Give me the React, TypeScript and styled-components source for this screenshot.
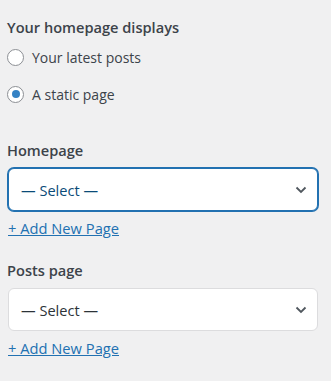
import * as React from 'react';
import styled, { createGlobalStyle } from 'styled-components';

const GlobalStyle = createGlobalStyle`
  html, body {
    margin: 0;
    padding: 0;
    background: #f0f0f1;
  }
  body {
    font-family: "Open Sans", "Noto Sans", sans-serif;
    font-size: 14px;
    color: #3c434a;
  }
`;

const Panel = styled.div`
  width: 331px;
  height: 381px;
  box-sizing: border-box;
  padding: 17px 13px 0 8px;
  display: flex;
  flex-direction: column;
`;

const Legend = styled.div`
  font-weight: 600;
  font-size: 14.6px;
  line-height: 20px;
  color: #3c434a;
  margin-left: -1px;
`;

const RadioList = styled.div`
  display: flex;
  flex-direction: column;
  gap: 17px;
  margin-top: 10px;
`;

const RadioRow = styled.label`
  display: flex;
  align-items: center;
  gap: 8px;
  height: 20px;
  font-size: 14px;
  color: #3c434a;
`;

const RadioCircle = styled.span<{ $checked?: boolean }>`
  width: 17px;
  height: 17px;
  box-sizing: border-box;
  border-radius: 50%;
  border: 1px solid #8c8f94;
  background: #fff;
  margin-left: -1px;
  display: flex;
  align-items: center;
  justify-content: center;

  &::after {
    content: '';
    width: 8px;
    height: 8px;
    border-radius: 50%;
    background: ${(p) => (p.$checked ? '#3582c4' : 'transparent')};
  }
`;

const Field = styled.div<{ $top: number }>`
  display: flex;
  flex-direction: column;
  margin-top: ${(p) => p.$top}px;
`;

const FieldLabel = styled.div`
  font-weight: 600;
  font-size: 14.6px;
  line-height: 20px;
  color: #3c434a;
  margin-left: -1px;
`;

const SelectBox = styled.div<{ $focused?: boolean }>`
  margin-top: 8px;
  width: 310px;
  height: 43px;
  box-sizing: border-box;
  background: #fff;
  border-radius: 6px;
  border: 1px solid ${(p) => (p.$focused ? '#2271b1' : '#dcdcde')};
  box-shadow: ${(p) => (p.$focused ? '0 0 0 1px #2271b1' : 'none')};
  display: flex;
  align-items: center;
  justify-content: space-between;
  padding: 0 10px 0 12px;
  color: ${(p) => (p.$focused ? '#0a4b78' : '#2c3338')};
  font-size: 14.6px;
`;

const Chevron = styled.svg`
  width: 12px;
  height: 8px;
  color: #50575e;
`;

const AddLink = styled.a`
  margin-top: 7px;
  font-size: 14.7px;
  line-height: 20px;
  color: #2271b1;
  text-decoration: underline;
  align-self: flex-start;
  cursor: pointer;
`;

function PageSelect({ label, focused, top }: { label: string; focused?: boolean; top: number }) {
  return (
    <Field $top={top}>
      <FieldLabel>{label}</FieldLabel>
      <SelectBox $focused={focused}>
        <span>— Select —</span>
        <Chevron viewBox="0 0 12 8" fill="none">
          <path d="M1.5 1.5 L6 6 L10.5 1.5" stroke="currentColor" strokeWidth="1.8" />
        </Chevron>
      </SelectBox>
      <AddLink>+ Add New Page</AddLink>
    </Field>
  );
}

export default function App() {
  return (
    <>
      <GlobalStyle />
      <Panel>
        <Legend>Your homepage displays</Legend>
        <RadioList>
          <RadioRow>
            <RadioCircle />
            Your latest posts
          </RadioRow>
          <RadioRow>
            <RadioCircle $checked />
            A static page
          </RadioRow>
        </RadioList>
        <PageSelect label="Homepage" focused top={36} />
        <PageSelect label="Posts page" top={22} />
      </Panel>
    </>
  );
}
